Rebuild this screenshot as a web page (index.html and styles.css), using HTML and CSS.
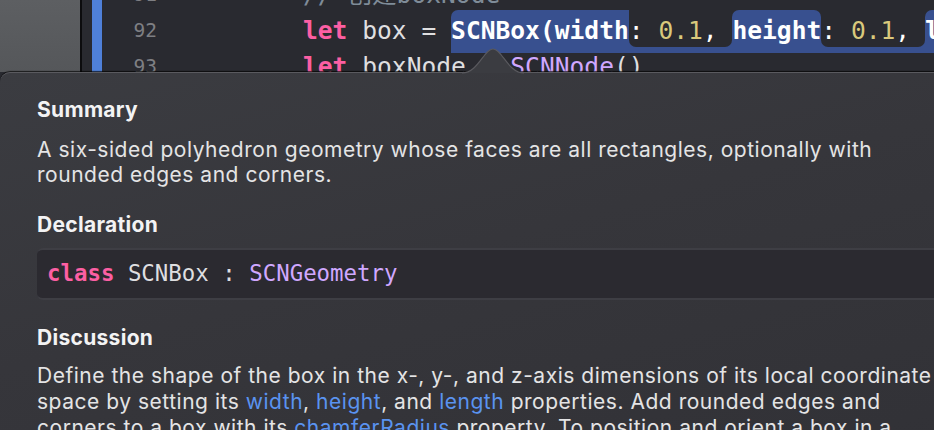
FILE: index.html
```html
<!DOCTYPE html>
<html lang="en">
<head>
<meta charset="utf-8">
<title>SCNBox Quick Help</title>
<link rel="stylesheet" href="styles.css">
</head>
<body>
<div class="editor">
  <div class="sidebar"></div>
  <div class="divider"></div>
  <div class="gutter">
    <div class="change"></div>
    <div class="nums"><div>91</div><div>92</div><div>93</div></div>
  </div>
  <div class="code">
    <div class="ln"><span class="cm">// 创建boxNode</span></div>
    <div class="ln"><span class="kw">let</span> box = <span class="sel"><span class="tok">SCNBox(width</span><span class="gap">: <span class="num">0.1</span>, </span><span class="tok">height</span><span class="gap">: <span class="num">0.1</span>, </span><span class="tok">length</span><span class="gap">: <span class="num">0.1</span>, </span></span></div>
    <div class="ln"><span class="kw">let</span> boxNode = <span class="ty">SCNNode</span>()</div>
  </div>
</div>
<div class="popover">
  <svg class="arrow" width="62" height="26" viewBox="0 0 62 26">
    <path d="M0 25 C 16 25 22 1 31 1 C 40 1 46 25 62 25 Z" fill="#3b3c41"/>
    <path d="M0 25 C 16 25 22 1 31 1 C 40 1 46 25 62 25" fill="none" stroke="#5a5a5f" stroke-width="1.2"/>
  </svg>
  <h2 class="title first">Summary</h2>
  <p class="text summary">A six-sided polyhedron geometry whose faces are all rectangles, optionally with rounded edges and corners.</p>
  <h2 class="title decl-title">Declaration</h2>
  <div class="decl"><span class="kw">class</span> SCNBox : <span class="ty">SCNGeometry</span></div>
  <h2 class="title disc-title">Discussion</h2>
  <p class="text discussion">Define the shape of the box in the x-, y-, and z-axis dimensions of its local coordinate space by setting its <span class="link">width</span>, <span class="link">height</span>, and <span class="link">length</span> properties. Add rounded edges and corners to a box with its <span class="link">chamferRadius</span> property. To position and orient a box in a</p>
</div>
</body>
</html>
```

FILE: styles.css
```css
* { box-sizing: border-box; margin: 0; padding: 0; }
html, body { width: 934px; height: 430px; overflow: hidden; }
body {
  background: #292a30;
  font-family: Inter, "Noto Sans", sans-serif;
}

.editor { display: flex; height: 72px; overflow: hidden; }
.sidebar { width: 80px; flex: none; background: linear-gradient(#5d5f62, #55575a); }
.divider { width: 2px; flex: none; background: #0c0c0e; }
.gutter { width: 221px; flex: none; display: flex; padding-left: 10px; }
.change { width: 10px; flex: none; background: #4f80d8; }
.nums {
  width: 55px;
  text-align: right;
  font-family: "DejaVu Sans Mono", monospace;
  font-size: 19.5px;
  line-height: 36px;
  color: #7e7f83;
  margin-top: -23px;
}
.code {
  flex: 1;
  min-width: 0;
  font-family: "DejaVu Sans Mono", "Noto Sans CJK SC", monospace;
  font-size: 24.6px;
  line-height: 36px;
  color: #dfdfe0;
  margin-top: -23.5px;
}
.ln { height: 36px; white-space: pre; }
.cm { color: #7f8c98; }
.kw { color: #fc5fa3; font-weight: 700; }
.ty { color: #d0a8ff; }
.num { color: #d9c97c; }
.sel {
  display: inline-block;
  margin-top: -3.5px;
  padding-top: 5px;
  line-height: 32px;
  background: linear-gradient(to bottom, transparent calc(100% - 14px), #38508f calc(100% - 14px));
  padding-bottom: 6px;
  color: #ffffff;
}
.tok {
  display: inline-block;
  padding-top: 5px;
  margin-top: -5px;
  background: #38508f;
  border-radius: 7px 7px 0 0;
  font-weight: 600;
}
.tok:first-child { border-radius: 7px 0 0 0; }
.gap {
  display: inline-block;
  padding-top: 5px;
  margin-top: -5px;
  background: #292a30;
  border-radius: 0 0 7px 7px;
}

.popover {
  position: relative;
  width: 980px;
  height: 400px;
  padding-left: 37px;
  background: linear-gradient(165deg, #3b3c41 0%, #36363b 45%, #313136 100%);
  border-top: 1px solid #5a5a5f;
  border-radius: 10px 0 0 0;
  box-shadow: 0 -1px 1px rgba(0, 0, 0, 0.7);
  color: #e4e4e5;
}
.arrow { position: absolute; left: 462px; top: -25px; }

.title {
  font-size: 21px;
  font-weight: 700;
  letter-spacing: 0.3px;
  line-height: 26px;
  color: #f3f3f4;
}
.title.first { margin-top: 24px; }
.decl-title { margin-top: 25px; }
.disc-title { margin-top: 25px; }
.text {
  width: 905px;
  font-size: 21px;
  letter-spacing: 0.52px;
  line-height: 25px;
}
.summary { margin-top: 14px; }
.discussion { margin-top: 12px; line-height: 26px; }
.link { color: #5a93f0; }

.decl {
  margin-top: 10px;
  height: 52px;
  background: #2b2a30;
  border-top: 2px solid #3e3e44;
  border-bottom: 2px solid #3e3e44;
  border-radius: 6px 0 0 6px;
  padding-left: 10px;
  font-family: "DejaVu Sans Mono", monospace;
  font-size: 22.4px;
  line-height: 46px;
  color: #dfdfe0;
  white-space: pre;
}
```
